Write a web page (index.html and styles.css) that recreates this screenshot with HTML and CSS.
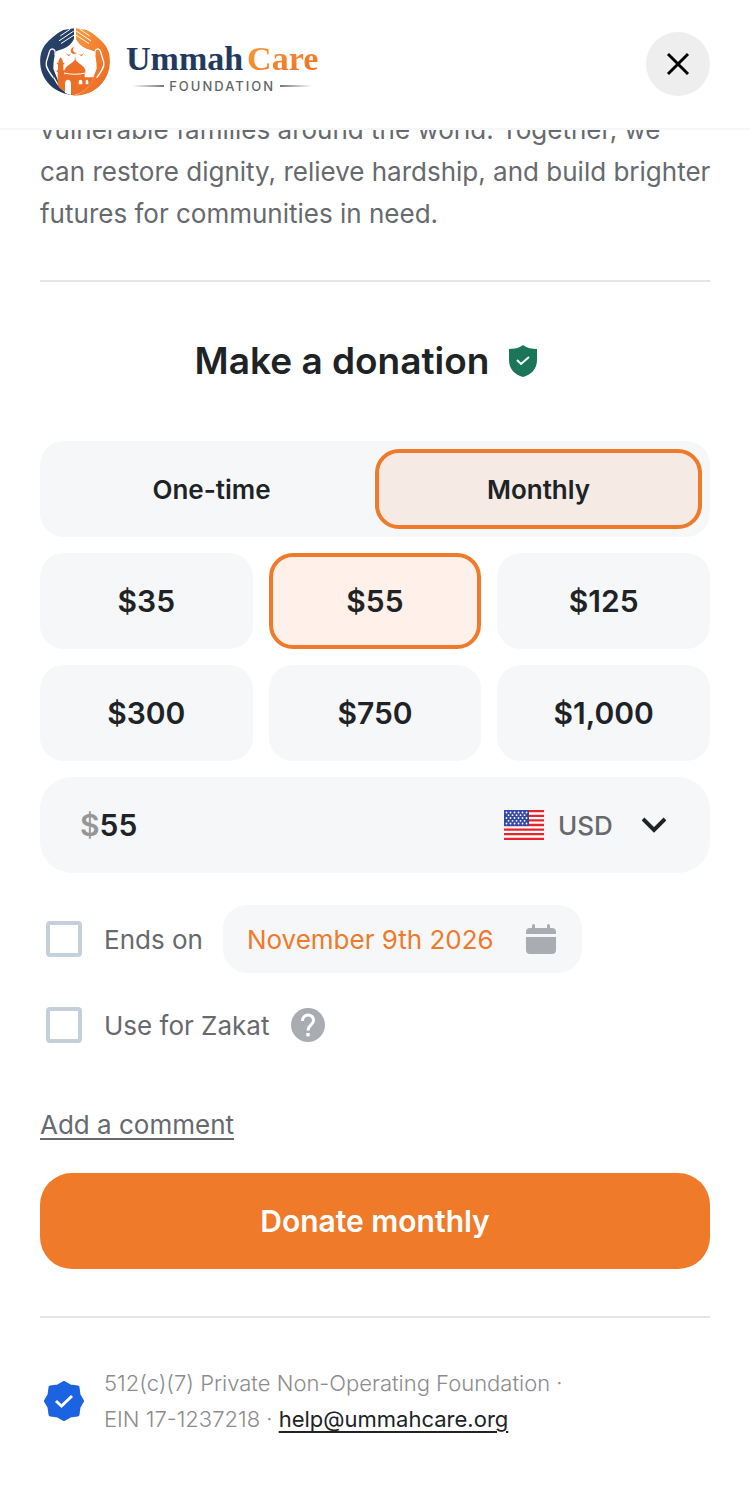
FILE: index.html
```
<!DOCTYPE html>
<html lang="en">

<head>
    <meta charset="UTF-8" />
    <meta name="viewport" content="width=device-width, initial-scale=1" />
    <title>Ummah Care Foundation - Make a donation</title>
    <link rel="stylesheet" href="styles.css">
</head>

<body>
    <header class="header">
        <a href="#" class="logo" aria-label="Ummah Care Foundation">
            <svg class="logo-mark" viewBox="12 18 210 204" aria-hidden="true">
                <defs>
                    <linearGradient id="orange" x1="0" y1="0" x2="1" y2="1">
                        <stop offset="0" stop-color="#f99b3e" />
                        <stop offset="1" stop-color="#ea6420" />
                    </linearGradient>
                    <linearGradient id="navy" x1="0" y1="0" x2="1" y2="1">
                        <stop offset="0" stop-color="#2c476f" />
                        <stop offset="1" stop-color="#1c3354" />
                    </linearGradient>
                </defs>
                <!-- left hand -->
                <path fill="url(#navy)" d="M114 19L82 24C62 34 42 50 26 70C14 88 11 108 13 128C17 175 55 216 118 220C86 212 70 190 62 166L52 140C52 122 54 104 60 88L82 80C97 74 108 64 114 50Z" />
                <!-- right hand -->
                <path fill="url(#orange)" d="M120 19L152 24C172 34 192 50 208 70C220 88 223 108 221 128C217 178 175 222 112 221C148 212 164 190 172 166L182 140C182 122 180 104 174 88L152 80C137 74 126 64 120 50Z" />
                <!-- gaps between the fingers -->
                <g fill="none" stroke="#fff" stroke-linecap="round" stroke-width="3">
                    <path d="M102 22L74 41M112 28L70 56M113 40L76 64" />
                    <path d="M132 22L160 41M122 28L164 56M121 40L158 64" />
                    <path stroke-width="4" d="M57 98C60 78 43 76 40 90L31 120C28 138 40 150 51 166" />
                    <path stroke-width="4" d="M177 98C174 78 191 76 194 90L203 120C206 138 194 150 183 166" />
                    <path stroke-width="4" d="M54 168C64 188 76 204 98 214" />
                </g>
                <!-- mosque -->
                <path fill="#ec6f28" d="M65 190V150H62V145H66V127H63V122H67C67 113 74 106 74 106C74 106 81 113 81 122H85V127H82V145H86V158H88C76 135 108 126 116 114L117 102L119 114C127 126 158 135 146 158V166H172C166 190 146 212 112 220C91 214 76 205 65 190Z" />
                <path fill="#fff" d="M87 213V185C87 169 105 169 105 185V219ZM128 187V181C128 171 139 171 139 181V187ZM149 187V181C149 171 157 171 157 181V187Z" />
                <path fill="none" stroke="#fff" stroke-width="3" d="M84 153C106 158 128 158 148 153" />
                <!-- crescent and birds -->
                <path fill="#ee7227" d="M116 76A10 10 0 1 0 123 91A8 8 0 1 1 116 76ZM89 94L97 98L105 96L98 103ZM128 97L136 98L144 93L137 103Z" />
            </svg>
            <span class="logo-text">
                <span class="logo-name"><span>Ummah</span><span class="logo-accent">Care</span></span>
                <span class="logo-sub">FOUNDATION</span>
            </span>
        </a>
        <button class="close-btn" type="button" aria-label="Close">
            <svg width="24" height="24" viewBox="0 0 24 24" aria-hidden="true">
                <path d="M2 2L22 22M22 2L2 22" fill="none" stroke="#000" stroke-width="3" />
            </svg>
        </button>
    </header>

    <main class="container">
        <div class="intro">
            <p>vulnerable families around the world. Together, we<br />
                can restore dignity, relieve hardship, and build brighter futures for communities in need.</p>
        </div>

        <form class="donation">
            <h1 class="title">
                Make a donation
                <svg width="28" height="32" viewBox="0 0 28 32" aria-hidden="true">
                    <path fill="#1a7559" d="M14 0C18 3 23 4 28 4V15C28 24 22 30 14 32C6 30 0 24 0 15V4C5 4 10 3 14 0Z" />
                    <path d="M8 15L12 19L20 12" fill="none" stroke="#fff" stroke-width="2" />
                </svg>
            </h1>

            <div class="tabs">
                <button type="button" class="tab" aria-pressed="false">One-time</button>
                <button type="button" class="tab active" aria-pressed="true">Monthly</button>
            </div>

            <div class="amounts">
                <button type="button" class="amount">$35</button>
                <button type="button" class="amount active">$55</button>
                <button type="button" class="amount">$125</button>
                <button type="button" class="amount">$300</button>
                <button type="button" class="amount">$750</button>
                <button type="button" class="amount">$1,000</button>
            </div>

            <div class="custom">
                <label for="amount" class="sign">$</label>
                <input type="text" id="amount" class="custom-input" value="55" inputmode="decimal" aria-label="Amount" />
                <svg class="flag" width="40" height="30" viewBox="0 0 40 30" aria-hidden="true">
                    <path fill="#fff" d="M0 0H40V30H0Z" />
                    <path stroke="#e5252a" stroke-width="2.300" d="M0 1.150H40M0 5.800H40M0 10.400H40M0 15H40M0 19.600H40M0 24.200H40M0 28.850H40" />
                    <path fill="#3548a8" d="M0 0H25V16H0Z" />
                    <g stroke="#fff" stroke-width="1.800" stroke-linecap="round" stroke-dasharray="0 4">
                        <path d="M2.500 2.500H24M2.500 8H24M2.500 13.500H24" />
                        <path d="M4.500 5.200H22M4.500 10.800H22" />
                    </g>
                </svg>
                <span class="currency">
                    <select aria-label="Currency">
                        <option>USD</option>
                    </select>
                    <svg class="chevron" width="24" height="16" viewBox="0 0 24 16" aria-hidden="true">
                        <path d="M1 2L12 13L23 2" fill="none" stroke="#202325" stroke-width="4" />
                    </svg>
                </span>
            </div>

            <div class="option option-date">
                <input type="checkbox" id="ends" class="check" />
                <label for="ends">Ends on</label>
                <button type="button" class="date-btn">
                    November 9th 2026
                    <svg width="30" height="30" viewBox="0 0 30 30" aria-hidden="true">
                        <path fill="#a9adb2" d="M6 4V1.500A1.500 1.500 0 0 1 9 1.500V4H21V1.500A1.500 1.500 0 0 1 24 1.500V4H26A4 4 0 0 1 30 8V10H0V8A4 4 0 0 1 4 4ZM0 13H30V26A4 4 0 0 1 26 30H4A4 4 0 0 1 0 26Z" />
                    </svg>
                </button>
            </div>

            <div class="option">
                <input type="checkbox" id="zakat" class="check" />
                <label for="zakat">Use for Zakat</label>
                <button type="button" class="help-btn" aria-label="About Zakat">
                    <svg width="34" height="34" viewBox="0 0 34 34" aria-hidden="true">
                        <circle cx="17" cy="17" r="17" fill="#a9adb2" />
                        <path d="M11.500 13C11.500 5 22.500 5 22.500 12.500C22.500 17 17 17 17 22.500" fill="none" stroke="#fff" stroke-width="3" />
                        <path fill="#fff" d="M15.300 25H18.700V28.400H15.300Z" />
                    </svg>
                </button>
            </div>

            <a href="#" class="comment-link">Add a comment</a>
            <button type="submit" class="donate-btn">Donate monthly</button>
        </form>

        <footer class="footer">
            <svg class="badge" width="40" height="40" viewBox="0 0 40 40" aria-hidden="true">
                <path fill="#1b63e0" stroke="#1b63e0" stroke-width="4" stroke-linejoin="round" d="M20 2L26 5.500L33.500 6.500L34.500 14L38 20L34.500 26L33.500 33.500L26 34.500L20 38L14 34.500L6.500 33.500L5.500 26L2 20L5.500 14L6.500 6.500L14 5.500Z" />
                <path d="M12 20L17.500 25L28 15" fill="none" stroke="#fff" stroke-width="3" />
            </svg>
            <p>512(c)(7) Private Non-Operating Foundation ·<br />
                EIN 17-1237218 · <a href="mailto:help@ummahcare.org">help@ummahcare.org</a></p>
        </footer>
    </main>
</body>

</html>
```
FILE: styles.css
```
* {
    margin: 0;
    padding: 0;
    box-sizing: border-box;
}

body {
    background-color: #fff;
    color: #202325;
    font-family: Inter, "Liberation Sans", sans-serif;
    font-size: 26px;
}

button,
input,
select {
    font: inherit;
    color: inherit;
    border: none;
    background: none;
}

button {
    cursor: pointer;
}

svg {
    display: block;
    flex-shrink: 0;
}

.header {
    position: sticky;
    top: 0;
    z-index: 10;
    display: flex;
    align-items: center;
    justify-content: space-between;
    height: 130px;
    padding: 0 40px;
    background-color: #fff;
    border-bottom: 2px solid #f5f6f8;
}

.logo {
    display: flex;
    align-items: center;
    gap: 16px;
    text-decoration: none;
}

.logo-mark {
    width: 70px;
    height: 68px;
    margin-bottom: 4px;
}

.logo-text {
    display: flex;
    flex-direction: column;
    padding-top: 4px;
}

.logo-name {
    display: flex;
    gap: 4px;
    font-family: "Liberation Serif", serif;
    font-size: 34px;
    font-weight: 700;
    line-height: 40px;
    color: #233a5e;
    white-space: nowrap;
}

.logo-accent {
    background: linear-gradient(160deg, #fba13c, #ec6a20);
    background-clip: text;
    -webkit-background-clip: text;
    color: transparent;
}

.logo-sub {
    display: flex;
    align-items: center;
    justify-content: center;
    gap: 5px;
    font-size: 13px;
    font-weight: 500;
    line-height: 14px;
    letter-spacing: 2px;
    color: #626466;
}

.logo-sub::before,
.logo-sub::after {
    content: "";
    width: 32px;
    height: 2px;
    background: linear-gradient(90deg, #fff, #777);
}

.logo-sub::after {
    background: linear-gradient(90deg, #777, #fff);
}

.close-btn {
    display: flex;
    align-items: center;
    justify-content: center;
    width: 64px;
    height: 64px;
    border-radius: 50%;
    background-color: #eee;
}

.container {
    padding: 0 40px 64px;
}

/* the first line slides under the sticky header */
.intro {
    margin-top: -21px;
    padding-bottom: 45px;
    line-height: 42px;
    color: #66696e;
    border-bottom: 2px solid #e3e5e6;
}

.intro p {
    margin-right: -20px;
}

.title {
    display: flex;
    align-items: center;
    justify-content: center;
    gap: 20px;
    padding: 55px 18px 56px 0;
    font-size: 37px;
    font-weight: 600;
    line-height: 48px;
}

.tabs {
    display: grid;
    grid-template-columns: 1fr 1fr;
    padding: 8px;
    border-radius: 24px;
    background-color: #f5f7f9;
}

.tab {
    height: 80px;
    border-radius: 24px;
    font-weight: 600;
}

.tab.active {
    border: 4px solid #ef7a29;
    background-color: #f5eae4;
}

.amounts {
    display: grid;
    grid-template-columns: repeat(3, 1fr);
    gap: 16px;
    margin: 16px 0;
}

.amount {
    height: 96px;
    border-radius: 24px;
    font-size: 30px;
    font-weight: 600;
    background-color: #f5f7f9;
}

.amount.active {
    border: 4px solid #ef7a29;
    background-color: #fff1e9;
}

.custom {
    display: flex;
    align-items: center;
    height: 96px;
    padding: 0 40px;
    border-radius: 32px;
    background-color: #f5f7f9;
    font-size: 30px;
    font-weight: 600;
}

.sign {
    color: #969696;
}

.custom-input {
    flex: 1;
    min-width: 0;
}

.flag {
    margin-right: 14px;
}

.currency {
    position: relative;
    font-size: 26px;
    font-weight: 500;
    color: #66696e;
}

.currency select {
    display: block;
    width: 112px;
    appearance: none;
}

.chevron {
    position: absolute;
    top: 50%;
    right: 4px;
    transform: translateY(-50%);
    pointer-events: none;
}

.option {
    display: flex;
    align-items: center;
    height: 36px;
    padding-left: 6px;
    color: #66696e;
}

.option-date {
    height: 68px;
    margin: 32px 0 34px;
}

.check {
    width: 36px;
    height: 36px;
    margin-right: 22px;
    border: 4px solid #c5d0dc;
    border-radius: 4px;
    appearance: none;
}

.check:checked {
    background-color: #ef7a29;
}

.date-btn {
    display: flex;
    align-items: center;
    gap: 32px;
    height: 68px;
    margin-left: 20px;
    padding: 0 26px 0 24px;
    border-radius: 24px;
    background-color: #f5f7f9;
    color: #ef7a29;
}

.help-btn {
    margin-left: 22px;
}

.comment-link {
    display: block;
    width: fit-content;
    margin: 64px 0 30px;
    line-height: 36px;
    color: #66696e;
    text-underline-offset: 4px;
    text-decoration-thickness: 2px;
}

.donate-btn {
    width: 100%;
    height: 96px;
    border-radius: 32px;
    background-color: #ef7a29;
    color: #fff;
    font-size: 30px;
    font-weight: 600;
}

.footer {
    display: flex;
    align-items: center;
    gap: 20px;
    margin-top: 47px;
    padding: 47px 0 0 4px;
    border-top: 2px solid #e3e5e6;
    font-size: 22px;
    font-weight: 300;
    line-height: 36px;
    color: #8c8c8c;
}

.footer a {
    color: #202325;
    font-weight: 400;
    text-underline-offset: 4px;
    text-decoration-thickness: 2px;
}
```
